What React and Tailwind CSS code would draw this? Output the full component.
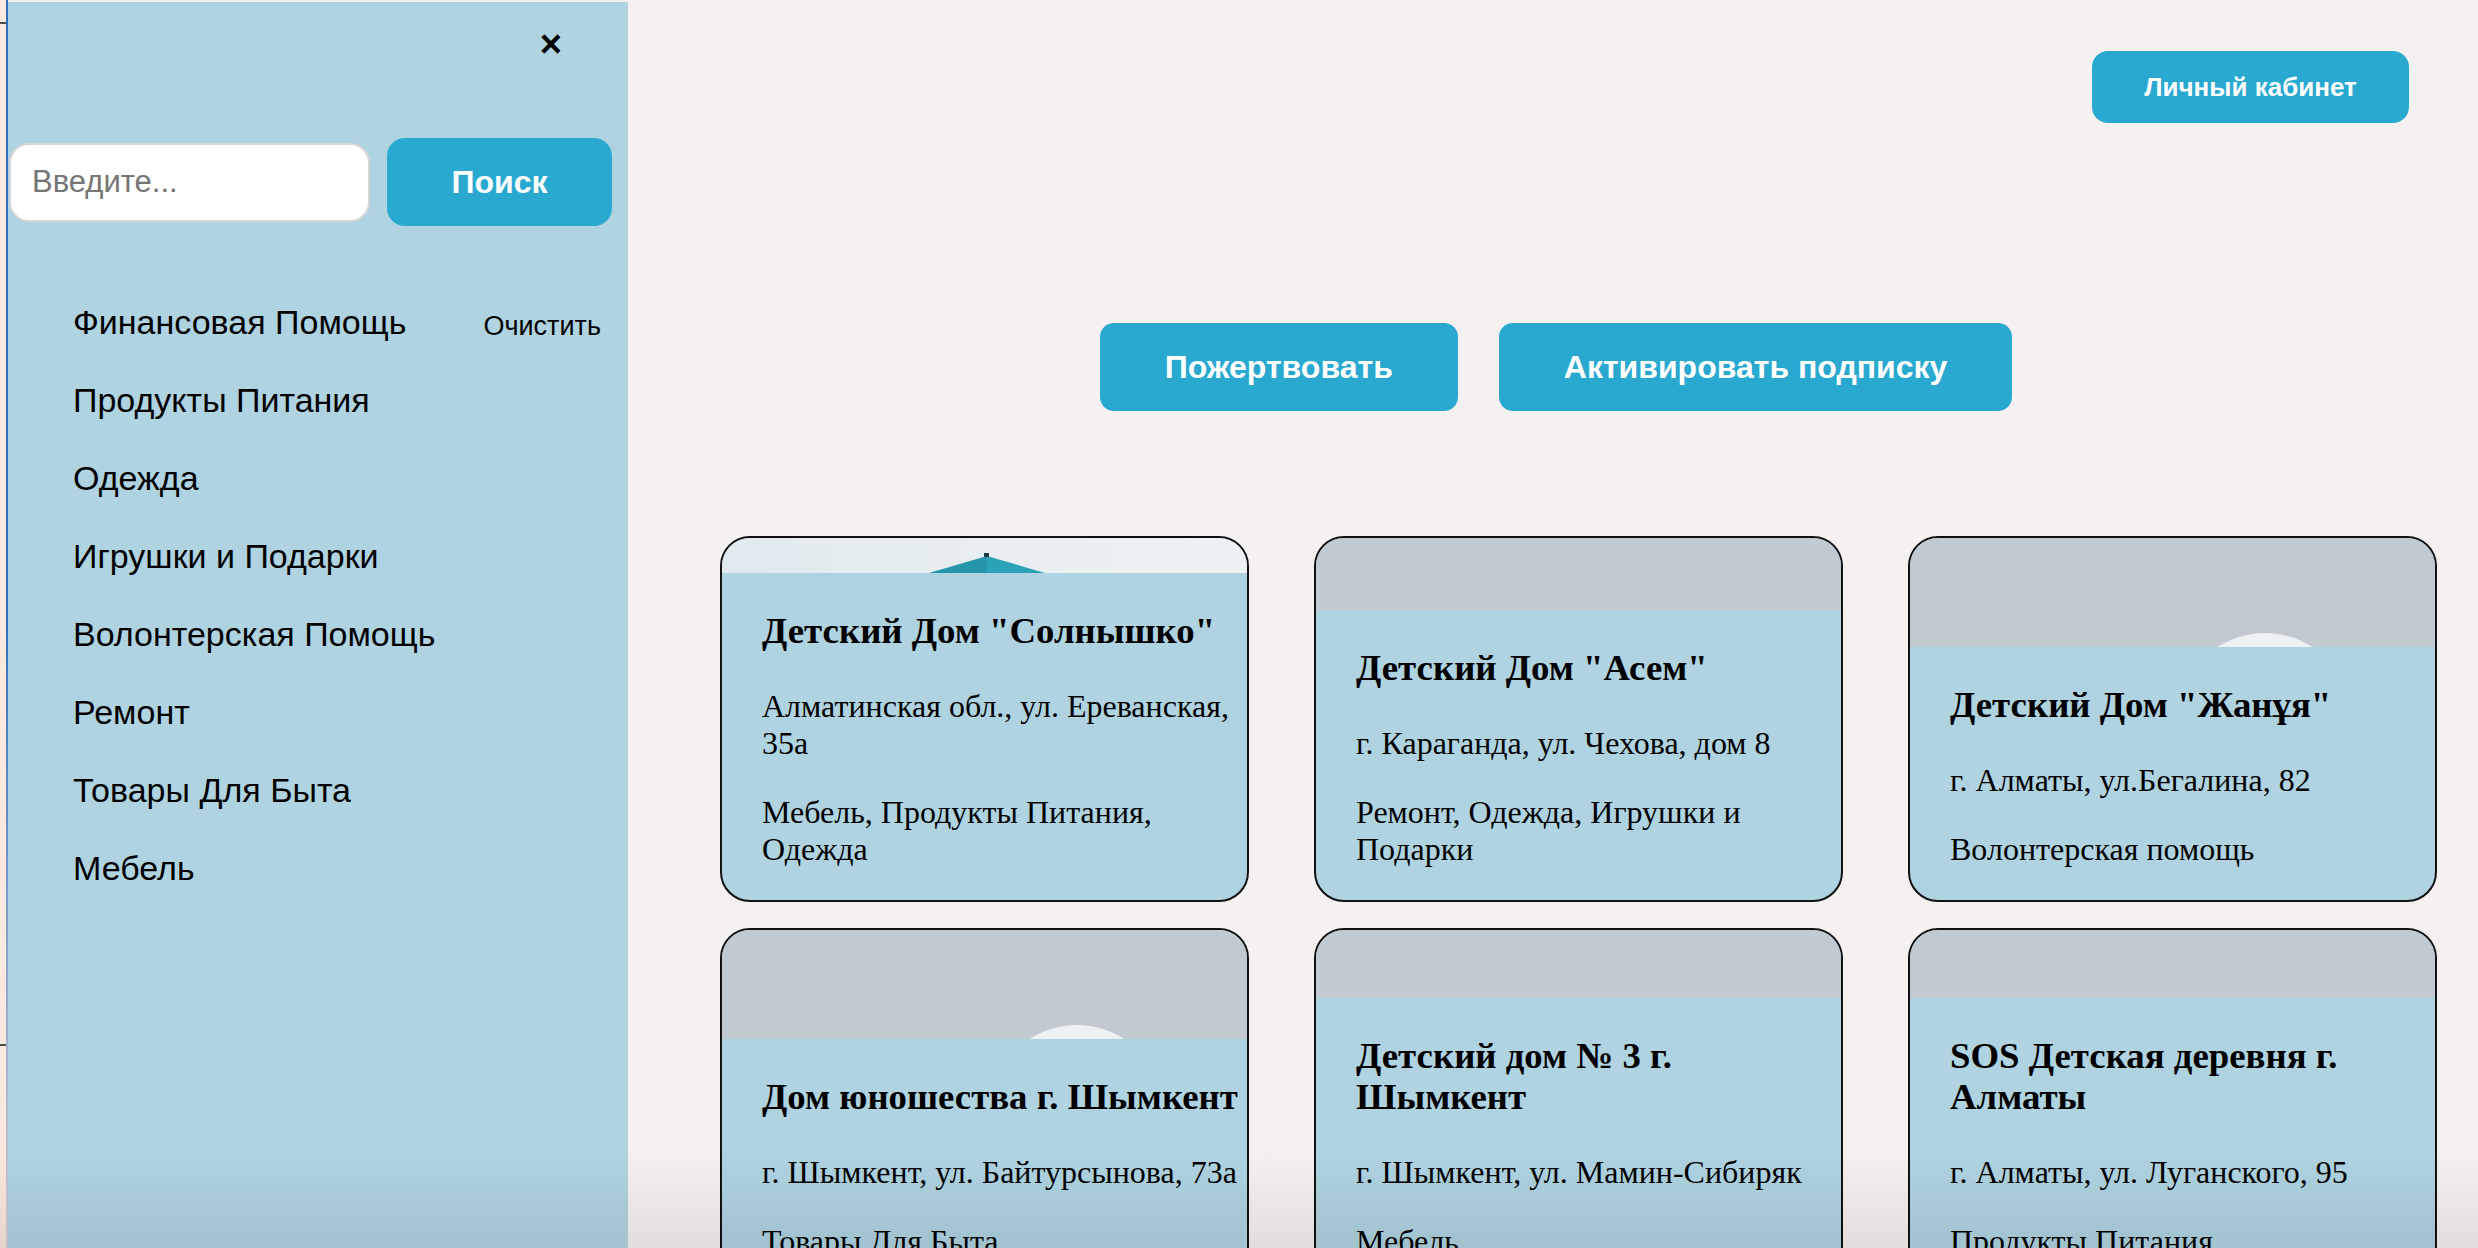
import React, { useState } from "react";

const categories = [
  "Финансовая Помощь",
  "Продукты Питания",
  "Одежда",
  "Игрушки и Подарки",
  "Волонтерская Помощь",
  "Ремонт",
  "Товары Для Быта",
  "Мебель",
];

const homes = [
  {
    id: 1,
    name: 'Детский Дом "Солнышко"',
    address: "Алматинская обл., ул. Ереванская, 35а",
    needs: "Мебель, Продукты Питания, Одежда",
    image: "sun",
  },
  {
    id: 2,
    name: 'Детский Дом "Асем"',
    address: "г. Караганда, ул. Чехова, дом 8",
    needs: "Ремонт, Одежда, Игрушки и Подарки",
    image: "plain",
  },
  {
    id: 3,
    name: 'Детский Дом "Жанұя"',
    address: "г. Алматы, ул.Бегалина, 82",
    needs: "Волонтерская помощь",
    image: "avatar",
  },
  {
    id: 4,
    name: "Дом юношества г. Шымкент",
    address: "г. Шымкент, ул. Байтурсынова, 73а",
    needs: "Товары Для Быта",
    image: "avatar",
  },
  {
    id: 5,
    name: "Детский дом № 3 г. Шымкент",
    address: "г. Шымкент, ул. Мамин-Сибиряк",
    needs: "Мебель",
    image: "plain",
  },
  {
    id: 6,
    name: "SOS Детская деревня г. Алматы",
    address: "г. Алматы, ул. Луганского, 95",
    needs: "Продукты Питания",
    image: "plain",
  },
];

const CardImage = ({ type }) => {
  if (type === "sun") {
    return (
      <div className="relative flex-1 overflow-hidden bg-linear-to-r from-[#e1eaef] to-[#eef1f3]">
        <svg
          className="absolute bottom-0 left-[207px]"
          width="116"
          height="20"
          viewBox="0 0 116 20"
        >
          <polygon points="0,20 58,3 58,20" fill="#2596ac" />
          <polygon points="58,3 116,20 58,20" fill="#2aa3b8" />
          <rect x="55" y="0" width="5" height="4" fill="#1d3a44" />
        </svg>
      </div>
    );
  }

  if (type === "avatar") {
    return (
      <div className="relative flex-1 overflow-hidden bg-[#c1c9d1]">
        <div className="absolute left-[267px] top-[95px] w-[176px] h-[176px] rounded-full bg-[#eef1f4]" />
      </div>
    );
  }

  return <div className="flex-1 bg-[#c1c9d1]" />;
};

const HomeCard = ({ home }) => (
  <div className="flex flex-col h-[366px] border-2 border-[#111] rounded-[30px] overflow-hidden bg-[#afd3e1]">
    <CardImage type={home.image} />
    <div className="shrink-0 pt-[37px] pb-[32px] pl-10 text-black font-['Liberation_Serif',serif]">
      <h3 className="text-[36.8px] font-bold leading-[41px]">{home.name}</h3>
      <p className="mt-[37px] text-[32px] leading-[37px]">{home.address}</p>
      <p className="mt-8 text-[32px] leading-[37px]">{home.needs}</p>
    </div>
  </div>
);

const App = () => {
  const [query, setQuery] = useState("");

  return (
    <div className="relative flex h-screen overflow-hidden bg-[#f5f1f0] font-['Liberation_Sans',Arial,sans-serif]">
      {/* left edge of the window behind */}
      <div className="w-[6px] shrink-0 bg-[#fbe8de]">
        <div className="mt-[22px] h-[2px] bg-[#4d4d4d]" />
        <div className="mt-[1020px] h-[2px] bg-[#4d4d4d]" />
      </div>
      <div className="w-[2px] shrink-0 bg-linear-to-b from-[#2f6fbf] via-[#2f6fbf] to-[#d6ced1]" />

      {/* Sidebar */}
      <aside className="w-[620px] shrink-0 mt-[2px] bg-[#afd3e1] flex flex-col">
        <div className="h-[84px] flex items-center justify-end pr-[66px]">
          <button className="text-[38px] leading-none text-black font-bold">×</button>
        </div>

        <div className="mt-[52px] flex items-center">
          <input
            type="text"
            value={query}
            onChange={(e) => setQuery(e.target.value)}
            placeholder="Введите..."
            className="ml-[1px] w-[361px] h-[79px] bg-white border-2 border-[#d6d6d6] rounded-[20px] pl-[21px] text-[31px] text-black placeholder:text-[#757575] outline-none"
          />
          <button className="ml-[17px] w-[225px] h-[88px] rounded-[18px] bg-[#29a9d0] text-white text-[32px] font-bold">
            Поиск
          </button>
        </div>

        <div className="mt-[57px] flex justify-between pl-[65px] pr-[27px]">
          <ul>
            {categories.map((c) => (
              <li key={c} className="text-[34px] leading-[78px] text-black">
                {c}
              </li>
            ))}
          </ul>
          <button className="self-start mt-1 text-[27px] leading-[78px] text-black">
            Очистить
          </button>
        </div>
      </aside>

      {/* Main */}
      <main className="flex-1 flex flex-col">
        <div className="flex justify-end pt-[51px] pr-[69px]">
          <button className="w-[317px] h-[72px] rounded-[16px] bg-[#29a9d0] text-white text-[26px] font-bold">
            Личный кабинет
          </button>
        </div>

        <div className="mt-[200px] flex justify-center gap-[41px] pl-[6px]">
          <button className="h-[88px] px-[65px] rounded-[14px] bg-[#29a9d0] text-white text-[32px] font-bold">
            Пожертвовать
          </button>
          <button className="h-[88px] px-[65px] rounded-[14px] bg-[#29a9d0] text-white text-[32px] font-bold">
            Активировать подписку
          </button>
        </div>

        <div className="mt-[125px] ml-[92px] grid grid-cols-[repeat(3,529px)] gap-x-[65px] gap-y-[26px]">
          {homes.map((home) => (
            <HomeCard key={home.id} home={home} />
          ))}
        </div>
      </main>

      {/* bottom shade */}
      <div className="pointer-events-none absolute bottom-0 left-0 right-0 h-[100px] bg-linear-to-b from-transparent to-black/[0.08]" />
    </div>
  );
};

export default App;
